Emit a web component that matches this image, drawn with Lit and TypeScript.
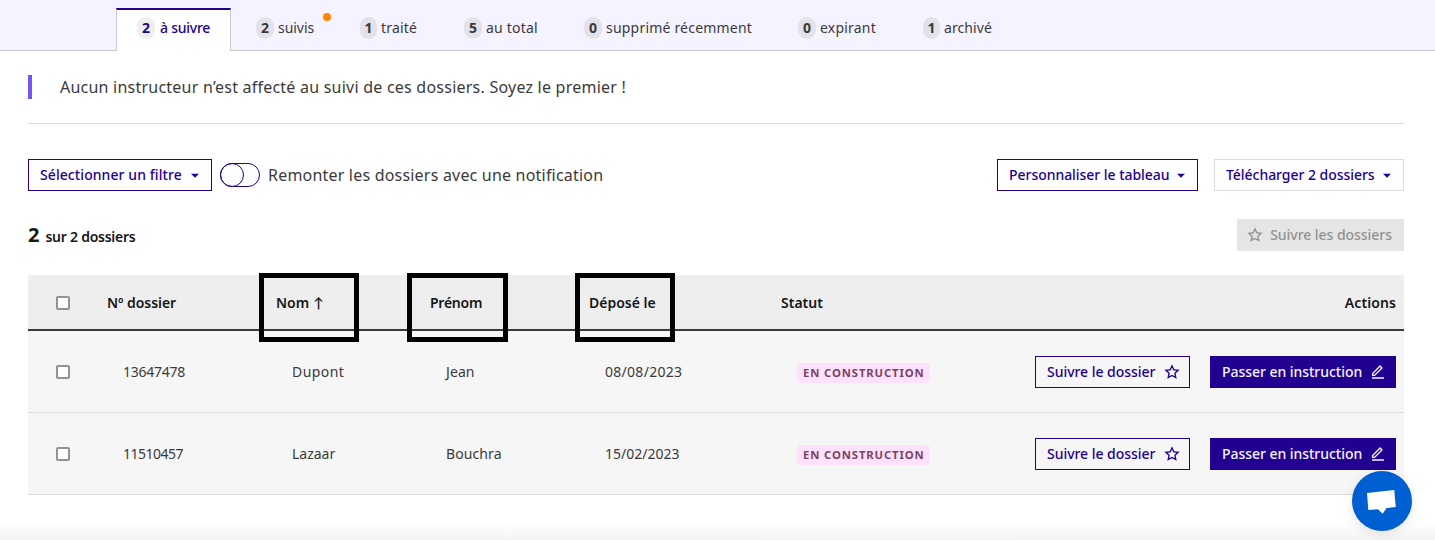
import { LitElement, html, svg, css } from "lit";

const STAR = "M12 18.26l-7.053 3.948 1.575-7.928L.587 8.792l8.027-.952L12 .5l3.386 7.34 8.027.952-5.935 5.488 1.575 7.928L12 18.26zm0-2.292l4.247 2.377-.949-4.773 3.573-3.305-4.833-.573L12 5.275l-2.038 4.42-4.833.572 3.573 3.305-.949 4.773L12 15.968z";
const EDIT = "M6.414 16L16.556 5.858l-1.414-1.414L5 14.586V16h1.414zm.829 2H3v-4.243L14.435 2.322a1 1 0 0 1 1.414 0l2.829 2.829a1 1 0 0 1 0 1.414L7.243 18zM3 20h18v2H3v-2z";
const CARET = "M12 16l-6-6h12z";

const icon = (d: string) => html`<svg class="icon" viewBox="0 0 24 24" aria-hidden="true">${svg`<path d=${d} fill="currentColor"></path>`}</svg>`;

interface Tab { n: number; label: string; cls: string; dot?: boolean }

const TABS: Tab[] = [
  { n: 2, label: "à suivre", cls: "w-first n2" },
  { n: 2, label: "suivis", cls: "w-s n1", dot: true },
  { n: 1, label: "traité", cls: "w-s narrow t2" },
  { n: 5, label: "au total", cls: "w-m t2" },
  { n: 0, label: "supprimé récemment", cls: "w-xl t2" },
  { n: 0, label: "expirant", cls: "w-l t2" },
  { n: 1, label: "archivé", cls: "w-l narrow t1" },
];

const ROWS = [
  { id: "13647478", nom: "Dupont", prenom: "Jean", date: "08/08/2023", nomCls: "t4", idCls: "n2", dateCls: "t3" },
  { id: "11510457", nom: "Lazaar", prenom: "Bouchra", date: "15/02/2023", nomCls: "", idCls: "n5", dateCls: "" },
];

class AppRoot extends LitElement {
  static styles = css`
    :host { display: block; position: relative; height: 540px; overflow: hidden; background: #fff; color: #3a3a3a;
      font: 14px/24px "Noto Sans", Lato, sans-serif; }
    * { box-sizing: border-box; }
    .n5 { letter-spacing: -.5px; } .n2 { letter-spacing: -.25px; } .n1 { letter-spacing: -.04px; }
    .t1 { letter-spacing: .09px; } .t2 { letter-spacing: .2px; } .t3 { letter-spacing: .28px; } .t4 { letter-spacing: .45px; }
    .tabs { display: flex; height: 51px; padding: 8px 0 0 116px; background: #f5f3ff; border-bottom: 1px solid #cacaca; }
    .tab { display: flex; align-items: flex-start; gap: 4px; height: 43px; padding: 9px 0 0 21px; line-height: 22px; white-space: nowrap; flex: none; }
    .w-first { width: 115px; margin-right: 4px; padding: 7px 0 0 20px; gap: 5px; background: #fff; color: #220090; font-weight: 500;
      border: 1px solid #cacaca; border-top: 2px solid #220090; border-bottom: 0; }
    .w-s { width: 104px; } .w-m { width: 120px; } .w-xl { width: 214px; } .w-l { width: 125px; }
    .n { display: block; height: 22px; padding: 0 5px; border-radius: 9px; background: #e3e1ea; font-weight: 700; letter-spacing: 0; }
    .narrow .n { padding: 0 4.5px; }
    .w-first .n { background: #eee; }
    .dot { width: 8px; height: 8px; border-radius: 50%; background: #ff8400; margin: -4px 0 0 5px; }
    main { padding: 24px 31px 0 28px; }
    .notice { height: 49px; border-bottom: 1px solid #ddd; font-size: 16px; }
    .notice p { margin: 0; height: 24px; padding-left: 28px; border-left: 4px solid #7553f5; letter-spacing: .23px; }
    .bar { display: flex; align-items: center; height: 32px; margin-top: 35px; }
    .spacer { flex: 1; }
    .btn { display: flex; align-items: center; justify-content: space-between; height: 32px; padding: 0 8px 0 11px; border: 1px solid #220090;
      color: #220090; font-weight: 500; white-space: nowrap; flex: none; }
    .icon { display: block; width: 16px; height: 16px; flex: none; }
    .b-filter { width: 184px; letter-spacing: .08px; } .b-custom { width: 201px; margin-right: 16px; }
    .b-dl { width: 190px; border-color: #ddd; }
    .b-off { width: 167px; padding: 0 11px 0 9px; background: #e5e5e5; border-color: #e5e5e5; color: #929292; }
    .b-follow { width: 155px; padding-right: 9px; }
    .b-pass { width: 186px; margin-left: 20px; padding-right: 9px; background: #220090; color: #f5f3ff; }
    .toggle { width: 40px; height: 24px; margin: 0 8px; border: 1px solid #220090; border-radius: 12px; }
    .toggle i { display: block; width: 24px; height: 24px; margin: -1px; border: 1px solid #220090; border-radius: 50%; }
    .lead { font-size: 16px; }
    .count { margin-top: 28px; color: #161616; font-weight: 600; }
    .count b { font-size: 20px; font-weight: 700; margin-right: 6px; }
    .count .of { padding-top: 4px; }
    .grid { display: grid; grid-template-columns: 71px 169px 154px 159px 192px 170px 1fr; align-items: center; }
    .head { height: 56px; margin-top: 24px; padding-top: 2px; background: #eee; border-bottom: 2px solid #3a3a3a; color: #161616; font-weight: 600; }
    .head > * { padding-left: 8px; }
    .head .end { padding: 0 8px 0 0; text-align: right; }
    .up { font-family: Lato; margin-left: 4px; line-height: 1; }
    .row { height: 82px; background: #f6f6f6; border-bottom: 1px solid #ddd; }
    .row > * { padding-left: 24px; }
    .grid > .check { padding-left: 28px; }
    .check i { display: block; width: 14px; height: 14px; border: 2px solid #929099; border-radius: 2px; background: #fff; }
    .badge { display: block; width: 133px; height: 20px; padding-left: 6px; border-radius: 4px; background: #fee2fd; color: #7b4363;
      font-size: 11.3px; line-height: 20px; font-weight: 700; letter-spacing: .87px; white-space: nowrap; margin-top: 3px; }
    .row > .acts { display: flex; justify-content: flex-end; padding: 0 8px 0 0; }
    .mark { position: absolute; top: 273px; width: 100px; height: 69px; border: 5px solid #000; }
    .m1 { left: 259px; } .m2 { left: 407px; top: 272.5px; width: 101px; } .m3 { left: 575px; }
    .fade { position: absolute; left: 0; right: 0; bottom: 0; height: 18px; background: linear-gradient(#fff0, #f4f4f4); }
    .chat { position: absolute; left: 1352px; top: 471px; width: 60px; height: 60px; border-radius: 50%; background: #0060d1; box-shadow: 0 3px 12px #0000001a; }
    .chat svg { display: block; }
  `;

  private check() { return html`<span class="check"><i></i></span>`; }

  render() {
    return html`
      <nav class="tabs">
        ${TABS.map(t => html`<a class="tab ${t.cls}"><span class="n">${t.n}</span><span>${t.label}</span>${t.dot ? html`<i class="dot"></i>` : ""}</a>`)}
      </nav>
      <main>
        <div class="notice"><p>Aucun instructeur n’est affecté au suivi de ces dossiers. Soyez le premier !</p></div>
        <div class="bar">
          <span class="btn b-filter"><span>Sélectionner un filtre</span>${icon(CARET)}</span>
          <span class="toggle"><i></i></span>
          <span class="lead t2">Remonter les dossiers avec une notification</span>
          <span class="spacer"></span>
          <span class="btn b-custom n1"><span>Personnaliser le tableau</span>${icon(CARET)}</span>
          <span class="btn b-dl n1"><span>Télécharger 2 dossiers</span>${icon(CARET)}</span>
        </div>
        <div class="bar count">
          <b>2</b><span class="of n2">sur 2 dossiers</span><span class="spacer"></span>
          <span class="btn b-off n1">${icon(STAR)}<span>Suivre les dossiers</span></span>
        </div>
        <div class="grid head">
          ${this.check()}<span class="n1">Nº dossier</span><span>Nom<span class="up">↑</span></span><span class="n2">Prénom</span><span>Déposé le</span>
          <span>Statut</span><span class="end t1">Actions</span>
        </div>
        ${ROWS.map(r => html`<div class="grid row">
          ${this.check()}<span class=${r.idCls}>${r.id}</span><span class=${r.nomCls}>${r.nom}</span><span class="t1">${r.prenom}</span><span class=${r.dateCls}>${r.date}</span>
          <span><span class="badge">EN CONSTRUCTION</span></span>
          <span class="acts">
            <span class="btn b-follow n1"><span>Suivre le dossier</span>${icon(STAR)}</span>
            <span class="btn b-pass n1"><span>Passer en instruction</span>${icon(EDIT)}</span>
          </span>
        </div>`)}
      </main>
      <div class="mark m1"></div><div class="mark m2"></div><div class="mark m3"></div>
      <div class="fade"></div>
      <div class="chat"><svg width="60" height="60" viewBox="0 0 60 60"><path d="M15 22L42.3 19 43.7 36 34.5 37 30.7 42.7 26 38.3 16.3 39z" fill="#fff"></path></svg></div>
    `;
  }
}
customElements.define("app-root", AppRoot);
